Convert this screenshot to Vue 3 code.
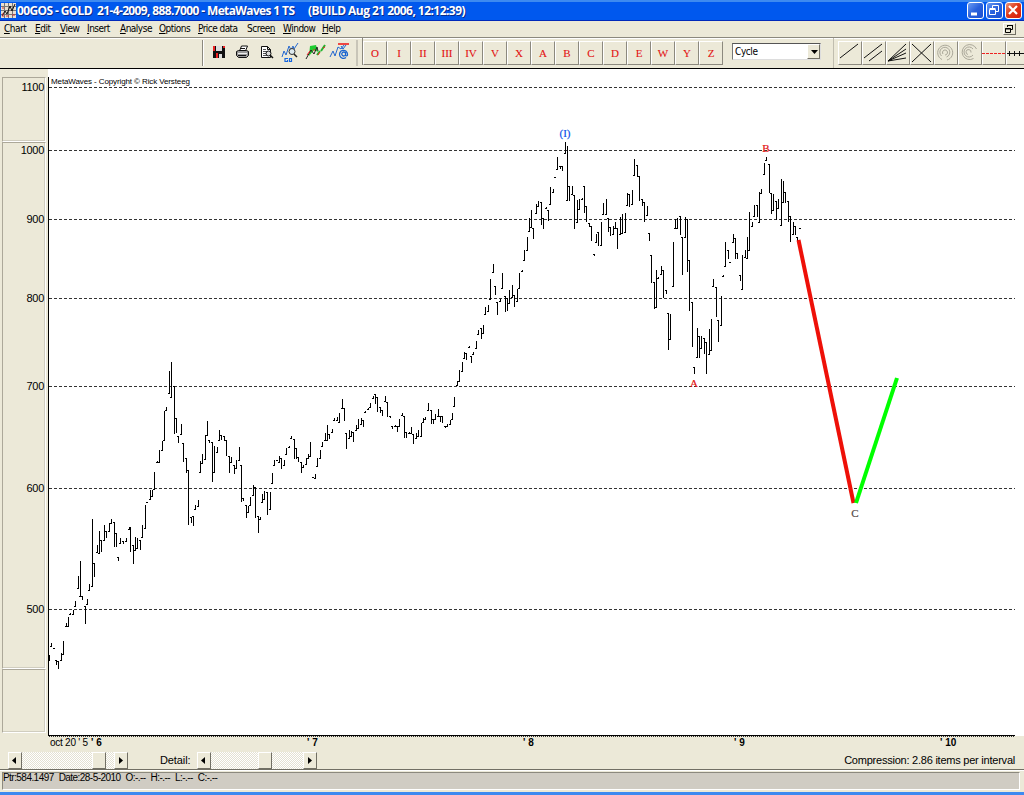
<template>
  <div class="window">
    <header class="title-bar">
      <svg class="app-icon" width="15" height="15" viewBox="0 0 15 15">
        <path fill="#e9dfd0" d="M0 0h15v15H0z" />
        <path stroke="#777" d="M3.500 0v15M7.500 0v15M11.500 0v15M0 3.500h15M0 7.500h15M0 11.500h15" />
        <path fill="none" stroke="#111" d="M1 13l3-5 2 3 3-8 2 5 3-7" />
        <path stroke="#c33" d="M1 5h2M5 13h3M11 12h3M2 10v4" />
      </svg>
      <span class="title-main">00GOS - GOLD&nbsp; 21-4-2009, 888.7000 - MetaWaves 1 TS</span>
      <span class="title-build">(BUILD Aug 21 2006, 12:12:39)</span>
      <div class="controls">
        <button class="control">
          <svg width="17" height="17"><path d="M4 12h6" stroke="#fff" stroke-width="3" /></svg>
        </button>
        <button class="control">
          <svg width="17" height="17" fill="none" stroke="#fff">
            <path d="M6.500 6V3.500h6v6H10" />
            <path d="M3.500 7.500h6v5h-6zM3.500 6.500h6" />
          </svg>
        </button>
        <button class="control red">
          <svg width="17" height="17"><path d="M4 4l8 8M12 4l-8 8" stroke="#fff" stroke-width="2.200" /></svg>
        </button>
      </div>
    </header>

    <nav class="menu-bar">
      <span v-for="m in menus" :key="m.key" class="menu" :class="m.key">{{ m.pre }}<u>{{ m.hot }}</u>{{ m.post }}</span>
      <button class="mdi-restore">
        <svg width="11" height="10" fill="none" stroke="#000">
          <path d="M3.500 3V1.500h5v4H7M1.500 4.500h5v4h-5zM3 1.500h6M1 5h6" />
        </svg>
      </button>
    </nav>

    <div class="tool-bar">
      <div class="file-tools">
        <svg width="152" height="26" viewBox="204 39 152 26" fill="none">
          <!-- save -->
          <path fill="#111" d="M213 46h12v12h-12z" />
          <path fill="#e22" d="M213 46h2v5h-2zM223 46h2v2h-2zM216 53h2v5h-2z" />
          <path fill="#ddd" d="M216 46h6v5h-6zM219 54h3v4h-3z" />
          <!-- print -->
          <path fill="#fff" stroke="#111" d="M239.500 51l2-5h6l-2 5z" />
          <path fill="#999" stroke="#111" d="M236.500 51.500l2-1h8l2 1v4l-2 2h-8l-2-2z" />
          <path stroke="#eee" d="M238 53.500h9" />
          <path stroke="#111" d="M238 55.500h8M241 48.500h4" />
          <!-- preview -->
          <path fill="#fff" stroke="#111" d="M261.500 46.500h6l3 3v8h-9zM267.500 46.500v3h3" />
          <path stroke="#555" d="M263 49.500h3M263 51.500h4M263 53.500h3M263 55.500h4" />
          <circle cx="268.500" cy="53.500" r="2.500" fill="#ddd" stroke="#111" />
          <path stroke="#111" stroke-width="1.500" d="M270 55l3 3" />
          <!-- zoom wave -->
          <path stroke="#2468d0" d="M282 57l2-6 2 4 3-9 2 4 2-4 1 3 4-6" />
          <circle cx="292" cy="51.500" r="3" fill="#dde9ef" stroke="#333" />
          <path stroke="#222" stroke-width="1.500" d="M294 54l3 3" />
          <path stroke="#1565df" stroke-width="1.200" d="M288 58.500h-3v3h2.500v-1.500M289.500 58.500h2v3h-2z" />
          <!-- draw waves -->
          <path fill="#20cc30" d="M310 46l6-1 2 7-4-2-5 6z" />
          <path stroke="#222" d="M306 59l5-9 3 4 3-7 1 4" />
          <path stroke="#20b52c" stroke-width="2" d="M317 55l3-4M321 51l4-6" />
          <path stroke="#e22" d="M307 55l3-4M313 50h2M318 55l2-3M323 48l2-1" />
          <!-- labels -->
          <path stroke="#2468d0" d="M330 57l3-6 2 5 3-9 3 2 3-4" />
          <path stroke="#e11" stroke-width="1.500" d="M338 44h11" />
          <path stroke="#1764d0" d="M341 46l2 3 3-4" />
          <path stroke="#1764d0" stroke-width="1.300" d="M346 57.500a4 4 0 1 1 1.500-3q0 2-2 1v-3.500M345.500 53a2 2 0 1 0 0 2" />
        </svg>
      </div>
      <div class="wave-tools">
        <button v-for="label in waves" :key="label" class="tool wave">{{ label }}</button>
      </div>
      <div class="combo">
        <span>Cycle</span>
        <i class="drop"><svg width="12" height="13"><path d="M3 5h7L6.500 9z" /></svg></i>
      </div>
      <div class="line-tools">
        <button v-for="(tool, i) in lineTools" :key="i" class="tool">
          <svg width="24" height="24" fill="none" :class="tool.kind"><path :d="tool.d" /></svg>
        </button>
      </div>
    </div>

    <main class="workspace">
      <aside class="scale">
        <div class="panel first"></div>
        <div class="panel second"></div>
        <div class="panel third"></div>
      </aside>
      <svg class="chart" width="1024" height="682" viewBox="0 69 1024 682">
        <path class="plot" d="M48 69h976v667H48z" />
        <g class="crisp">
          <path v-for="g in grid" :key="g.value" class="grid-line" :d="`M49 ${g.y + 0.5}H1015`" />
          <path class="axis" d="M48.500 77V735.500H1015" />
          <path class="ticks" d="M49 736.500H1015" />
          <path class="bars" :d="barPath" />
        </g>
        <text v-for="g in grid" :key="'t' + g.value" class="price" x="44" :y="g.y + 4">{{ g.value }}</text>
        <text class="copyright" x="51" y="84" textLength="139">MetaWaves - Copyright © Rick Versteeg</text>
        <text class="year" x="50" y="746" textLength="38">oct 20 ' 5</text>
        <text v-for="y in years" :key="y.x" class="year bold" :x="y.x" y="746">' {{ y.label }}</text>
        <path class="decline" d="M798.500 240L853.500 503" />
        <path class="rally" d="M856 503L897 378" />
        <text class="mark blue" x="565" y="137">(I)</text>
        <text class="mark" x="694" y="387">A</text>
        <text class="mark" x="766" y="152">B</text>
        <text class="mark grey" x="855" y="517">C</text>
      </svg>
    </main>

    <div class="scroll-row">
      <div class="scroll position">
        <i class="arrow"><svg width="16" height="16"><path d="M9 4v7L5 7.500z" /></svg></i>
        <i class="thumb"></i>
        <i class="arrow"><svg width="16" height="16"><path d="M6 4v7l4-3.500z" /></svg></i>
      </div>
      <span class="detail">Detail:</span>
      <div class="scroll zoom">
        <i class="arrow"><svg width="16" height="16"><path d="M9 4v7L5 7.500z" /></svg></i>
        <i class="thumb"></i>
        <i class="arrow"><svg width="16" height="16"><path d="M6 4v7l4-3.500z" /></svg></i>
      </div>
      <span class="compression">Compression: 2.86 items per interval</span>
    </div>

    <footer class="status">
      <div class="status-well">
        <span>Ptr:584.1497</span><span>Date:28-5-2010</span><span>O:-.--</span><span>H:-.--</span><span>L:-.--</span><span>C:-.--</span>
      </div>
    </footer>
  </div>
</template>

<script setup>
import { computed } from 'vue'

const menus = [
  { key: 'chart-menu', pre: '', hot: 'C', post: 'hart' },
  { key: 'edit', pre: '', hot: 'E', post: 'dit' },
  { key: 'view', pre: '', hot: 'V', post: 'iew' },
  { key: 'insert', pre: '', hot: 'I', post: 'nsert' },
  { key: 'analyse', pre: '', hot: 'A', post: 'nalyse' },
  { key: 'options', pre: '', hot: 'O', post: 'ptions' },
  { key: 'price-data', pre: '', hot: 'P', post: 'rice data' },
  { key: 'screen', pre: 'Scree', hot: 'n', post: '' },
  { key: 'window-menu', pre: '', hot: 'W', post: 'indow' },
  { key: 'help', pre: '', hot: 'H', post: 'elp' }
]

const waves = ['O', 'I', 'II', 'III', 'IV', 'V', 'X', 'A', 'B', 'C', 'D', 'E', 'W', 'Y', 'Z']

const lineTools = [
  { d: 'M2 17L20 3' },
  { d: 'M2 17L20 3M7 20L20 10' },
  { d: 'M2 20L20 3M2 20L20 8M2 20L20 12M2 20L20 17' },
  { d: 'M2 3L21 21M2 21L21 3' },
  { kind: 'pale', d: 'M8 18.500a7.500 7.500 0 1 1 5 .5M7.500 15a5 5 0 1 1 5 1M9 13a2.500 2.500 0 1 1 2 1' },
  { kind: 'pale', d: 'M18.500 8a7.500 7.500 0 1 0-3 9.500M15 8a5 5 0 1 0 0 6M10 13.500a2.500 2.500 0 1 1 3-2' },
  { kind: 'dashed', d: 'M0 12.500H23' },
  { d: 'M1 12.500H23M3.500 10v5M8.500 10v5M13.500 10v5M18.500 10v5' }
]

const grid = [
  { value: 1100, y: 87 },
  { value: 1000, y: 150 },
  { value: 900, y: 219 },
  { value: 800, y: 298 },
  { value: 700, y: 386 },
  { value: 600, y: 488 },
  { value: 500, y: 609 }
]

const years = [
  { x: 91, label: '6' },
  { x: 307, label: '7' },
  { x: 523, label: '8' },
  { x: 734, label: '9' },
  { x: 940, label: '10' }
]

// each bar is "x high low" in thirds of a pixel, measured from the section origin
const sections = [
  {
    x: 40,
    y: 340,
    bars: `27 946 962,35 910 920,42 925 928,50 962 975,55 965 987,64 940 962,71 904 946,78 850 862,85 832 862,
      92 821 825,99 811 824,107 783 800,114 709 748,121 665 770,127 768 780,136 798 851,143 779 796,149 733 753,
      157 538 740,164 670 712,171 616 638,178 574 643,185 601 635,193 555 602,200 573 595,208 549 575,214 537 552,
      222 547 622,229 580 621,236 651 664,242 596 612,250 603 611,258 596 606,267 562 570,272 562 637,280 617 672,
      286 592 632,293 595 628,301 600 630,308 556 595,317 496 566,323 486 490,331 452 480,338 450 470,344 397 450,
      351 363 368,358 331 370,366 304 332,373 213 304,380 202 213,388 93 163,394 67 174,403 138 282,410 235 278,
      416 290 310,424 252 284,431 310 365,438 354 400,446 392 556,453 532 548,460 530 557,466 496 510,474 481 502,
      481 363 400,488 343 373,496 286 360,502 244 288,509 300 310,518 308 427,524 320 398,532 323 340,538 270 303,
      545 286 300,552 288 302,560 302 348,568 350 398,575 352 370,583 375 402,590 362 388,597 321 362,604 375 486,
      611 475 483,618 497 534,625 500 518,632 473 497,641 435 467,647 442 534,655 530 578`
  },
  {
    x: 230,
    y: 340,
    bars: `91 533 541,97 462 490,104 453 480,113 457 526,120 457 510,127 400 433,134 360 378,141 360 363,147 348 368,
      154 354 387,162 360 378,169 324 344,177 319 325,184 289 298,192 297 356,199 325 357,206 352 366,214 367 400,
      221 375 383,228 356 376,234 343 357,241 307 352,250 411 414,256 403 416,263 355 380,271 331 358,277 307 322,
      285 280 302,292 255 302,299 284 298,307 267 278,313 234 242,321 231 244,328 221 250,336 177 206,343 206 244,
      349 280 328,357 270 298,365 273 292,371 277 306,379 255 272,386 239 267,393 236 256,401 241 260,407 213 220,
      415 204 211,422 190 203,431 170 177,436 163 192,443 172 217,450 202 218,457 210 227,466 170 186,473 186 230,
      480 228 235,488 260 266,495 255 261,502 258 277,509 238 260,516 221 228,523 228 293,530 278 293,537 277 282,
      544 261 282,551 282 311,558 279 296,565 271 290,573 250 290,580 234 250,587 232 240,596 189 212,603 212 252,
      610 238 251,617 222 240,624 209 230,631 228 247,638 228 248,645 258 263,652 253 260,660 240 256,667 221 240,
      674 172 200`
  },
  {
    x: 440,
    y: 120,
    bars: `51 785 797,58 750 787,66 727 757,73 697 718,80 700 720,88 679 683,95 710 728,101 697 705,109 663 686,
      116 630 644,123 625 658,131 616 642,137 562 586,145 556 576,152 478 541,159 432 458,167 498 524,173 546 586,
      181 538 545,188 460 508,195 530 575,202 536 572,209 510 552,216 497 535,223 525 562,231 508 546,239 460 508,
      246 451 455,253 392 422,261 352 393,267 296 335,275 271 325,281 325 357,289 252 281,296 243 262,303 247 314,
      310 294 328,318 262 266,325 270 302,332 202 256,340 207 220,346 172 174,353 113 149,361 138 146,368 139 152,
      376 67 101`
  },
  {
    x: 560,
    y: 120,
    bars: `22 78 244,29 199 244,37 199 226,43 225 327,51 240 308,58 237 270,66 235 240,73 200 280,80 260 305,
      87 309 320,95 318 364,102 402 407,109 343 370,115 337 377,123 306 378,131 250 286,138 238 285,145 294 336,
      152 322 347,160 318 346,166 306 327,173 325 386,181 293 346,187 282 342,195 280 338,202 219 259,209 222 262,
      217 212 255,223 118 167,231 137 172,238 170 242,246 237 257,253 247 307,261 258 287,267 340 364,274 405 490,
      282 487 568,289 451 563,296 473 476,303 438 466,311 451 535,318 512 522,325 579 689,332 583 661,339 367 502`
  },
  {
    x: 670,
    y: 130,
    bars: `16 269 296,23 265 296,31 260 315,38 323 434,45 262 323,52 268 425,59 391 542,67 516 650,73 712 733,
      81 594 685,88 619 685,95 619 656,102 625 673,110 637 731,117 598 674,124 567 664,131 448 472,138 472 560,
      146 570 635,153 499 587,160 436 440,167 337 411,175 360 388,181 398 400,189 313 339,196 325 387,203 370 388,
      210 436 452,217 376 481,225 360 384,232 323 386,239 246 362,247 277 290,254 226 260,261 226 260,268 187 280,
      275 178 193,283 100 134,290 82 92,297 102 190,304 190 252,311 193 243,319 214 270,326 208 236,333 148 287,
      340 154 219,347 187 220,355 214 275,362 259 336,369 277 314,376 290 314,383 322 337,391 294 296`
  }
]

const barPath = computed(() => {
  let d = ''
  for (const s of sections) {
    let prev = null
    for (const item of s.bars.split(',')) {
      const [a, b, c] = item.trim().split(' ').map(Number)
      const x = Math.floor(s.x + a / 3)
      const top = Math.floor(s.y + b / 3)
      const bottom = Math.max(top + 1, Math.round(s.y + c / 3))
      d += `M${x + 0.5} ${top}V${bottom}`
      // the opening tick sits on the side the move started from
      const rising = prev === null || top + bottom < prev
      d += rising ? `M${x - 1} ${bottom - 0.5}h1` : `M${x - 1} ${top + 0.5}h1`
      prev = top + bottom
    }
  }
  return d
})
</script>

<style>
body {
  margin: 0;
  overflow: hidden;
}
</style>

<style scoped>
.window {
  width: 1024px;
  height: 795px;
  display: flex;
  flex-direction: column;
  background: #ece9d8;
  font: 10px "DejaVu Sans Condensed", "Liberation Sans", sans-serif;
  color: #000;
  overflow: hidden;
}

.window * {
  box-sizing: border-box;
}

.window svg {
  display: block;
}

button {
  padding: 0;
  margin: 0;
  border: 0;
  font: inherit;
}

.title-bar {
  height: 21px;
  flex: none;
  display: flex;
  align-items: center;
  background: linear-gradient(#3d8af0 0 2px, #0058ee 2px 20px, #0029ba 20px);
  color: #fff;
  font: bold 12px "Open Sans", sans-serif;
  text-shadow: 1px 1px #0a2a88;
  white-space: nowrap;
  padding: 0 2px 0 1px;
}

.title-main {
  width: 291px;
  margin-left: 1px;
  letter-spacing: -0.63px;
}

.title-build {
  letter-spacing: -0.55px;
}

.controls {
  margin-left: auto;
  display: flex;
  gap: 2px;
}

.control {
  width: 17px;
  height: 17px;
  border: 1px solid #fff;
  border-radius: 3px;
  background: linear-gradient(135deg, #6b9cf3, #2860dc 50%, #1d50d0);
}

.control svg {
  margin: -1px;
}

.control.red {
  background: linear-gradient(135deg, #e9967c, #e03a18 45%, #d51c0c);
}

.menu-bar {
  height: 16px;
  flex: none;
  display: flex;
  align-items: center;
  padding: 0 8px 0 4px;
  white-space: nowrap;
  letter-spacing: -0.5px;
}

.menu {
  width: 31px;
  line-height: 14px;
}

.menu.edit { width: 25px; }
.menu.view { width: 27px; }
.menu.insert { width: 33px; }
.menu.analyse { width: 39px; }
.menu.options { width: 39px; }
.menu.price-data { width: 49px; letter-spacing: -0.55px; }
.menu.screen { width: 36px; }
.menu.window-menu { width: 39px; }

.mdi-restore {
  margin-left: auto;
  width: 13px;
  height: 12px;
  background: #ece9d8;
  border: 1px solid;
  border-color: #fff #716f64 #716f64 #fff;
}

.tool-bar {
  height: 32px;
  flex: none;
  display: flex;
  border-top: 1px solid #8c897e;
  border-bottom: 1px solid #000;
  box-shadow: inset 0 1px #fff;
}

.file-tools {
  width: 156px;
  margin: 2px 0 2px 202px;
  border-left: 1px solid #8c897e;
  border-right: 2px solid #c8c5b8;
  box-shadow: inset 1px 0 #fff;
}

.file-tools svg {
  margin-left: 1px;
  margin-top: -1px;
}

.wave-tools,
.line-tools {
  display: flex;
  padding-top: 3px;
}

.wave-tools {
  margin-left: 5px;
  box-shadow: -1px 0 #8c897e;
  height: 27px;
}

.tool {
  width: 24px;
  height: 24px;
  flex: none;
  background: #ece9d8;
  border: 1px solid;
  border-color: #fff #8c897e #8c897e #fff;
}

.tool svg {
  margin: -1px;
  stroke: #111;
}

.tool .pale {
  stroke: #aaa799;
}

.tool .dashed {
  stroke: #e22;
  stroke-dasharray: 3 1;
}

.wave {
  font: 11px "Liberation Serif", serif;
  color: #e31212;
  -webkit-text-stroke: 0.1px #e31212;
}

.combo {
  width: 89px;
  height: 17px;
  margin: 5px 0 0 9px;
  display: flex;
  background: #fff;
  border: 1px solid;
  border-color: #555 #ddd #ddd #777;
  padding: 0 0 0 2px;
  line-height: 15px;
  letter-spacing: -0.4px;
}

.drop {
  margin-left: auto;
  width: 13px;
  background: #ece9d8;
  border: 1px solid;
  border-color: #fff #716f64 #716f64 #fff;
}

.line-tools {
  margin-left: 12px;
  padding-left: 4px;
  border-left: 1px solid #c0bdaf;
  width: 191px;
  overflow: hidden;
}

.workspace {
  height: 682px;
  flex: none;
  display: grid;
}

.scale,
.chart {
  grid-area: 1 / 1;
}

.scale {
  width: 48px;
  padding: 8px 2px 0 2px;
}

.panel {
  border: 1px solid #aca899;
  border-color: #aca899 #fff #fff #aca899;
  box-shadow: inset -1px -1px #d0cdbf;
}

.first { height: 65px; }
.second { height: 527px; }
.third { height: 64px; }

.chart {
  font-family: "Liberation Sans", sans-serif;
}

.crisp {
  shape-rendering: crispEdges;
  fill: none;
  stroke: #000;
}

.plot {
  fill: #fff;
}

.grid-line {
  stroke: #333;
  stroke-dasharray: 3 2;
}

.ticks {
  stroke: #333;
  stroke-dasharray: 1 1;
}

.price {
  font-size: 11px;
  text-anchor: end;
  letter-spacing: -0.3px;
}

.copyright {
  font-size: 8px;
}

.year {
  font-size: 10px;
}

.bold {
  font-weight: bold;
}

.decline,
.rally {
  fill: none;
  stroke: #ee1008;
  stroke-width: 4;
}

.rally {
  stroke: #0f0;
}

.mark {
  font: 11px "Liberation Serif", serif;
  text-anchor: middle;
  fill: #e31212;
  stroke: #e31212;
  stroke-width: 0.2;
}

.blue {
  fill: #0a50e8;
  stroke: #0a50e8;
}

.grey {
  fill: #554a48;
  stroke: #554a48;
}

.scroll-row {
  height: 18px;
  flex: none;
  display: flex;
  align-items: center;
  font: 11px "Liberation Sans", sans-serif;
  padding: 0 9px 0 8px;
}

.scroll {
  width: 120px;
  height: 17px;
  display: flex;
  background: repeating-conic-gradient(#fff 0 25%, #e4e1d2 0 50%) 0 0 / 2px 2px;
}

.arrow,
.thumb {
  width: 14px;
  height: 17px;
  flex: none;
  background: #ece9d8;
  border: 1px solid;
  border-color: #fff #716f64 #716f64 #fff;
}

.arrow svg {
  margin-left: -2px;
}

.arrow:last-child {
  margin-left: auto;
}

.position .thumb {
  margin-left: 70px;
}

.zoom .thumb {
  margin-left: 47px;
}

.detail {
  width: 37px;
  margin-left: 32px;
  letter-spacing: -0.1px;
}

.compression {
  margin-left: auto;
  letter-spacing: -0.23px;
}

.status {
  height: 26px;
  flex: none;
  border-top: 1px solid #716f64;
  border-bottom: 3px solid #3d8af0;
  padding: 2px 4px 3px 2px;
  box-shadow: inset 0 1px #fff;
}

.status-well {
  height: 18px;
  background: #d0ccc3;
  border: 1px solid;
  border-color: #8c897e #fff #fff #8c897e;
  display: flex;
  gap: 5px;
  font: 10px/10px "Liberation Sans", sans-serif;
  letter-spacing: -0.55px;
}
</style>
